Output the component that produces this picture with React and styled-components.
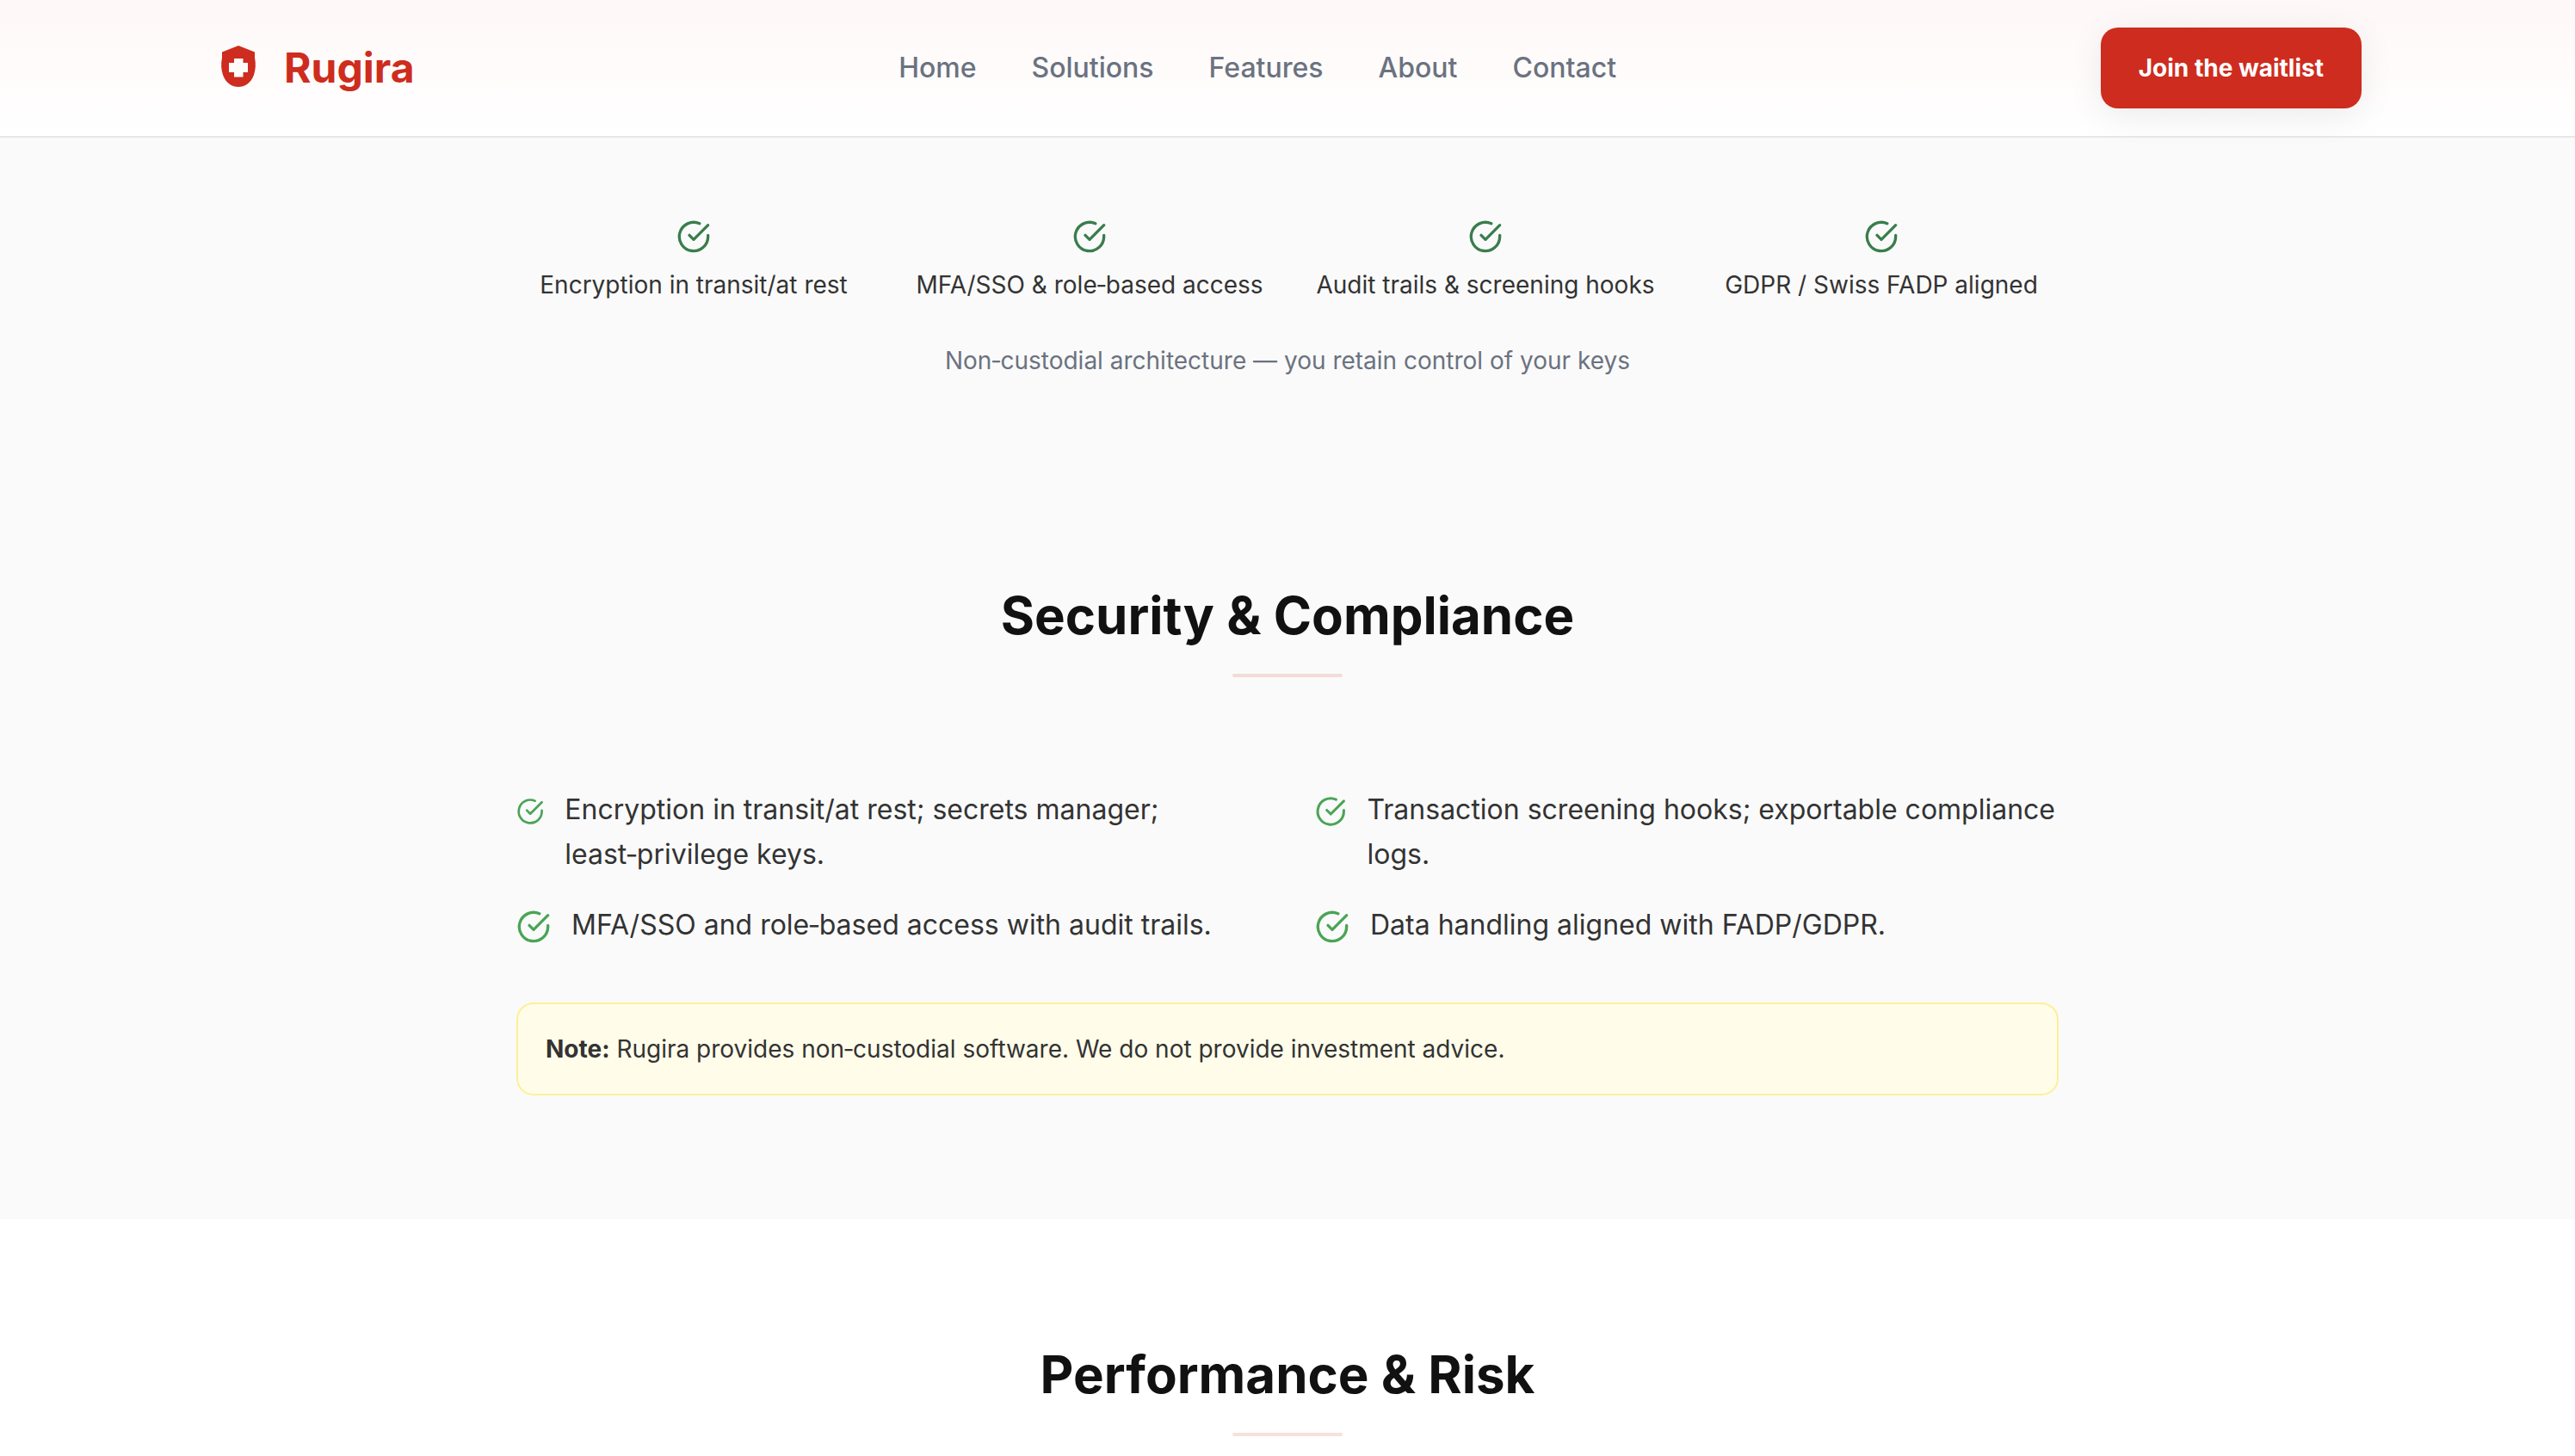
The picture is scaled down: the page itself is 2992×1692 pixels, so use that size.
import React from "react";
import styled, { createGlobalStyle } from "styled-components";

const GlobalStyle = createGlobalStyle`
  *, *::before, *::after { box-sizing: border-box; }
  body {
    margin: 0;
    background: #ffffff;
    color: #333333;
    font-family: Inter, "Liberation Sans", sans-serif;
    font-size: 32px;
    line-height: 52px;
    -webkit-font-smoothing: antialiased;
  }
  h2, p, ul { margin: 0; padding: 0; }
  ul { list-style: none; }
`;

const Page = styled.div`
  height: 100vh;
  overflow: hidden;
`;

const Header = styled.header`
  position: relative;
  border-bottom: 2px solid #e5e7eb;
  background: linear-gradient(to bottom, #fef8f7, #ffffff);
`;

const HeaderInner = styled.div`
  display: flex;
  align-items: center;
  justify-content: space-between;
  max-width: 2560px;
  margin: 0 auto;
  padding: 32px;
`;

const Brand = styled.a`
  display: flex;
  align-items: center;
  gap: 24px;
  color: #ce2c1e;
  font-size: 48px;
  font-weight: 700;
  line-height: 64px;
  text-decoration: none;
`;

const Nav = styled.nav`
  display: flex;
  gap: 64px;
`;

const NavLink = styled.a`
  color: #6b7280;
  font-weight: 500;
  line-height: 48px;
  text-decoration: none;
`;

const WaitlistButton = styled.button`
  padding: 24px 44px;
  border: 0;
  border-radius: 20px;
  background: #ce2c1e;
  box-shadow: 0 8px 40px rgba(0, 0, 0, 0.08);
  color: #ffffff;
  font: 700 28px/46px Inter, "Liberation Sans", sans-serif;
  cursor: pointer;
`;

const Band = styled.div`
  background: #fafafa;
`;

const Content = styled.div`
  max-width: 1792px;
  margin: 0 auto;
`;

const TrustSection = styled.section`
  padding: 95px 0 96px;
`;

const TrustGrid = styled.ul`
  display: grid;
  grid-template-columns: repeat(4, 1fr);
  gap: 48px;
`;

const TrustItem = styled.li`
  display: flex;
  flex-direction: column;
  align-items: center;
  gap: 16px;
  font-size: 28px;
  line-height: 40px;
  white-space: nowrap;
`;

const TrustNote = styled.p`
  margin-top: 48px;
  color: #6b7280;
  font-size: 28px;
  line-height: 40px;
  text-align: center;
`;

const Section = styled.section`
  padding: 144px 0;
`;

const SectionTitle = styled.h2`
  color: #111111;
  font-size: 60px;
  font-weight: 700;
  line-height: 72px;
  text-align: center;

  &::after {
    content: "";
    display: block;
    width: 128px;
    height: 4px;
    margin: 32px auto 0;
    border-radius: 2px;
    background: rgba(206, 44, 30, 0.15);
  }
`;

const FeatureGrid = styled.ul`
  display: grid;
  grid-template-columns: repeat(2, 1fr);
  gap: 30px 64px;
  margin-top: 128px;
`;

const Feature = styled.li`
  display: flex;
  align-items: flex-start;
  gap: 24px;
`;

const CheckSvg = styled.svg`
  width: 40px;
  height: 40px;
  margin-top: ${(p) => (p.$inline ? "8px" : "0")};
  fill: none;
  stroke: ${(p) => p.$color};
  stroke-width: 2;
  stroke-linecap: round;
  stroke-linejoin: round;
`;

const Notice = styled.p`
  margin-top: 64px;
  padding: 32px;
  border: 2px solid #fdf096;
  border-radius: 20px;
  background: #fffdea;
  font-size: 28px;
  line-height: 40px;
`;

const ShieldLogo = () => (
  <svg width="58" height="64" viewBox="0 -1 58 64" aria-hidden="true">
    <path
      fill="#ce2c1e"
      fillRule="evenodd"
      d="M29 5 48 12.500V19C49.500 26 49 33 47 39C43.500 49 36 53 29 53S14.500 49 11 39C9 33 8.500 26 10 19V12.500ZM24 20V25H18V36H24V41.500H34.500V36H40V25H34.500V20Z"
    />
  </svg>
);

const CheckIcon = ({ color, inline }) => (
  <CheckSvg viewBox="0 0 24 24" $color={color} $inline={inline} aria-hidden="true">
    <path d="M22 11.080V12a10 10 0 1 1-5.930-9.140" />
    <path d="m9 11 3 3L22 4" />
  </CheckSvg>
);

const navItems = ["Home", "Solutions", "Features", "About", "Contact"];

// Compound words use the non-breaking hyphen (U+2011) so they stay on one line.
const trustItems = [
  "Encryption in transit/at rest",
  "MFA/SSO & role\u2011based access",
  "Audit trails & screening hooks",
  "GDPR / Swiss FADP aligned",
];

const features = [
  "Encryption in transit/at rest; secrets manager; least\u2011privilege keys.",
  "Transaction screening hooks; exportable compliance logs.",
  "MFA/SSO and role\u2011based access with audit trails.",
  "Data handling aligned with FADP/GDPR.",
];

export default function App() {
  return (
    <Page>
      <GlobalStyle />
      <Header>
        <HeaderInner>
          <Brand href="#home">
            <ShieldLogo />
            Rugira
          </Brand>
          <Nav>
            {navItems.map((item) => (
              <NavLink key={item} href={`#${item.toLowerCase()}`}>
                {item}
              </NavLink>
            ))}
          </Nav>
          <WaitlistButton type="button">Join the waitlist</WaitlistButton>
        </HeaderInner>
      </Header>
      <main>
        <Band>
          <TrustSection>
            <Content>
              <TrustGrid>
                {trustItems.map((item) => (
                  <TrustItem key={item}>
                    <CheckIcon color="#3a7d4c" />
                    {item}
                  </TrustItem>
                ))}
              </TrustGrid>
              <TrustNote>
                {"Non\u2011custodial architecture — you retain control of your keys"}
              </TrustNote>
            </Content>
          </TrustSection>
          <Section>
            <Content>
              <SectionTitle>Security &amp; Compliance</SectionTitle>
              <FeatureGrid>
                {features.map((item) => (
                  <Feature key={item}>
                    <CheckIcon color="#4aa456" inline />
                    <span>{item}</span>
                  </Feature>
                ))}
              </FeatureGrid>
              <Notice>
                <strong>Note:</strong>
                {" Rugira provides non\u2011custodial software. We do not provide investment advice."}
              </Notice>
            </Content>
          </Section>
        </Band>
        <Section>
          <Content>
            <SectionTitle>Performance &amp; Risk</SectionTitle>
          </Content>
        </Section>
      </main>
    </Page>
  );
}
